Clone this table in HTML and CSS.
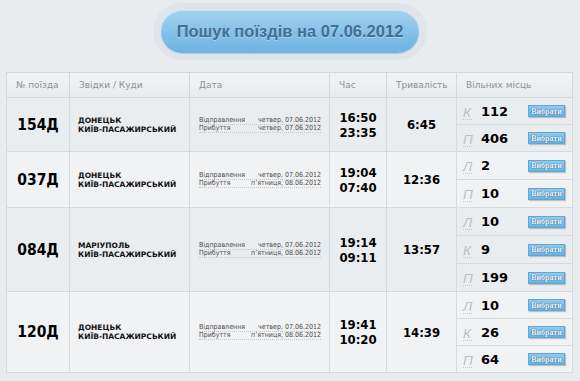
FILE: index.html
```html
<!DOCTYPE html>
<html lang="uk">
<head>
<meta charset="utf-8">
<title>Пошук поїздів</title>
<link rel="stylesheet" href="styles.css">
</head>
<body>
<div class="page">
  <div class="top">
    <div class="halo"><div class="search-btn">Пошук поїздів на 07.06.2012</div></div>
  </div>
  <table class="trains">
    <colgroup>
      <col class="c-num"><col class="c-route"><col class="c-date"><col class="c-time"><col class="c-dur"><col class="c-seats">
    </colgroup>
    <thead>
      <tr><th>№ поїзда</th><th>Звідки / Куди</th><th>Дата</th><th>Час</th><th>Тривалість</th><th>Вільних місць</th></tr>
    </thead>
    <tbody class="dark">
      <tr>
        <td rowspan="2" class="num">154Д</td>
        <td rowspan="2" class="route">ДОНЕЦЬК<br>КИЇВ-ПАСАЖИРСЬКИЙ</td>
        <td rowspan="2" class="date"><div class="dl"><span>Відправлення</span><span>четвер, 07.06.2012</span></div><div class="dl"><span>Прибуття</span><span>четвер, 07.06.2012</span></div></td>
        <td rowspan="2" class="time">16:50<br>23:35</td>
        <td rowspan="2" class="dur">6:45</td>
        <td class="seat s2"><div class="sw"><span class="cls">К</span><span class="cnt">112</span><span class="pick">Вибрати</span></div></td>
      </tr>
      <tr><td class="seat s2"><div class="sw"><span class="cls">П</span><span class="cnt">406</span><span class="pick">Вибрати</span></div></td></tr>
    </tbody>
    <tbody class="light">
      <tr>
        <td rowspan="2" class="num">037Д</td>
        <td rowspan="2" class="route">ДОНЕЦЬК<br>КИЇВ-ПАСАЖИРСЬКИЙ</td>
        <td rowspan="2" class="date"><div class="dl"><span>Відправлення</span><span>четвер, 07.06.2012</span></div><div class="dl"><span>Прибуття</span><span>п’ятниця, 08.06.2012</span></div></td>
        <td rowspan="2" class="time">19:04<br>07:40</td>
        <td rowspan="2" class="dur">12:36</td>
        <td class="seat"><div class="sw"><span class="cls">Л</span><span class="cnt">2</span><span class="pick">Вибрати</span></div></td>
      </tr>
      <tr><td class="seat"><div class="sw"><span class="cls">П</span><span class="cnt">10</span><span class="pick">Вибрати</span></div></td></tr>
    </tbody>
    <tbody class="dark">
      <tr>
        <td rowspan="3" class="num">084Д</td>
        <td rowspan="3" class="route">МАРІУПОЛЬ<br>КИЇВ-ПАСАЖИРСЬКИЙ</td>
        <td rowspan="3" class="date"><div class="dl"><span>Відправлення</span><span>четвер, 07.06.2012</span></div><div class="dl"><span>Прибуття</span><span>п’ятниця, 08.06.2012</span></div></td>
        <td rowspan="3" class="time">19:14<br>09:11</td>
        <td rowspan="3" class="dur">13:57</td>
        <td class="seat"><div class="sw"><span class="cls">Л</span><span class="cnt">10</span><span class="pick">Вибрати</span></div></td>
      </tr>
      <tr><td class="seat"><div class="sw"><span class="cls">К</span><span class="cnt">9</span><span class="pick">Вибрати</span></div></td></tr>
      <tr><td class="seat"><div class="sw"><span class="cls">П</span><span class="cnt">199</span><span class="pick">Вибрати</span></div></td></tr>
    </tbody>
    <tbody class="light">
      <tr>
        <td rowspan="3" class="num">120Д</td>
        <td rowspan="3" class="route">ДОНЕЦЬК<br>КИЇВ-ПАСАЖИРСЬКИЙ</td>
        <td rowspan="3" class="date"><div class="dl"><span>Відправлення</span><span>четвер, 07.06.2012</span></div><div class="dl"><span>Прибуття</span><span>п’ятниця, 08.06.2012</span></div></td>
        <td rowspan="3" class="time">19:41<br>10:20</td>
        <td rowspan="3" class="dur">14:39</td>
        <td class="seat s2"><div class="sw"><span class="cls">Л</span><span class="cnt">10</span><span class="pick">Вибрати</span></div></td>
      </tr>
      <tr><td class="seat s2"><div class="sw"><span class="cls">К</span><span class="cnt">26</span><span class="pick">Вибрати</span></div></td></tr>
      <tr><td class="seat s2"><div class="sw"><span class="cls">П</span><span class="cnt">64</span><span class="pick">Вибрати</span></div></td></tr>
    </tbody>
  </table>
</div>
</body>
</html>
```
FILE: styles.css
```css
html, body {
  margin: 0;
  padding: 0;
  background: #e9ecef;
  font-family: "DejaVu Sans", Verdana, sans-serif;
  color: #111;
}
.page {
  width: 580px;
  height: 381px;
  overflow: hidden;
  padding: 3px 0 0 0;
  box-sizing: border-box;
}
.top {
  display: flex;
  justify-content: center;
  height: 69px;
}
.halo {
  width: 258px;
  height: 43px;
  padding: 7px 8px 7px 8px;
  border-radius: 30px;
  background: #dfe5ea;
}
.search-btn {
  height: 43px;
  border-radius: 22px;
  background: linear-gradient(#a4d3f0, #86c2e9 50%, #6db2df);
  box-shadow: inset 0 1px 0 rgba(255,255,255,0.4), 0 1px 1px rgba(60,110,150,0.25);
  display: flex;
  align-items: center;
  justify-content: center;
  font-family: "Liberation Sans", Arial, sans-serif;
  font-weight: bold;
  font-size: 16.5px;
  color: #3f6f92;
  text-shadow: 0 1px 0 rgba(255,255,255,0.35);
}
.trains {
  margin-left: 6px;
  width: 566px;
  table-layout: fixed;
  border-collapse: collapse;
  border: 1px solid #d3d8dc;
}
.c-num { width: 63px; }
.c-route { width: 120px; }
.c-date { width: 140px; }
.c-time { width: 57px; }
.c-dur { width: 70px; }
.c-seats { width: 116px; }
.trains th {
  height: 24px;
  padding: 0 0 0 9px;
  text-align: left;
  font-weight: normal;
  font-size: 9px;
  color: #8a9297;
  background: linear-gradient(#f1f3f5, #e8ebee);
  border: 1px solid #d3d8dc;
  white-space: nowrap;
}
.trains td {
  border: 1px solid #d5dade;
  padding: 0;
  vertical-align: middle;
}
.dark td { background: #eaedf0; }
.light td { background: #f1f2f4; }
.num {
  text-align: center;
  font-family: "DejaVu Sans Condensed", "DejaVu Sans", sans-serif;
  font-weight: bold;
  font-size: 15.5px;
  color: #000;
}
.route {
  padding-left: 8px !important;
  font-weight: bold;
  font-size: 7.5px;
  line-height: 9px;
  color: #111;
  white-space: nowrap;
}
.date {
  padding: 0 8px 0 9px !important;
  font-family: "DejaVu Sans Condensed", "DejaVu Sans", sans-serif;
  font-size: 7px;
  color: #4a4a4a;
}
.dl {
  display: flex;
  justify-content: space-between;
  line-height: 7px;
  white-space: nowrap;
  border-bottom: 1px dotted #c4c8cc;
}
.time {
  text-align: center;
  font-family: "DejaVu Sans Condensed", "DejaVu Sans", sans-serif;
  font-weight: bold;
  font-size: 13px;
  line-height: 15px;
  color: #000;
}
.dur {
  text-align: center;
  font-family: "DejaVu Sans Condensed", "DejaVu Sans", sans-serif;
  font-weight: bold;
  font-size: 13px;
  color: #000;
}
.seat {
  height: 27px;
}
.seat.s2 {
  height: 26px;
}
.sw {
  display: flex;
  align-items: center;
  padding: 0 7px 0 6px;
}
.cls {
  width: 9px;
  font-family: "Liberation Sans", Arial, sans-serif;
  font-style: italic;
  font-size: 13.5px;
  line-height: 13px;
  color: #babfc3;
  border-bottom: 1px dotted #c2c6ca;
  margin-right: 9px;
  margin-top: 3px;
}
.cnt {
  font-weight: bold;
  font-size: 13px;
  color: #000;
}
.pick {
  margin-left: auto;
  width: 37px;
  height: 12px;
  box-sizing: border-box;
  display: flex;
  align-items: center;
  justify-content: center;
  font-family: "Liberation Serif", "Times New Roman", serif;
  font-weight: bold;
  font-size: 8px;
  color: #f4f9fd;
  background: linear-gradient(#8fcbef, #66b3e2);
  border: 1px solid #5ea7d6;
  box-shadow: 1px 1px 1px rgba(0,0,0,0.2);
  text-shadow: 0 0 1px #2c5c80, 0 0 1px #2c5c80;
}
```
